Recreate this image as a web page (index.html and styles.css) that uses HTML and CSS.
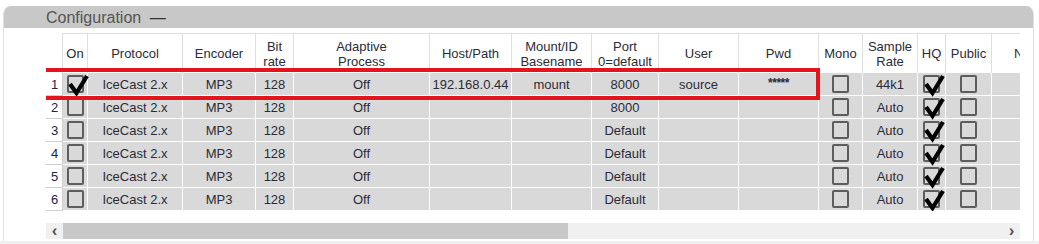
FILE: index.html
```html
<!DOCTYPE html>
<html lang="en">
<head>
  <meta charset="UTF-8">
  <title>Configuration</title>
  <link rel="stylesheet" href="styles.css">
</head>
<body>
  <div class="panel">
    <div class="panel-head">Configuration <span class="collapse">—</span></div>
    <div class="panel-body">
      <div class="grid-wrap">
        <table class="grid">
          <colgroup>
            <col style="width:17px"><col style="width:25px"><col style="width:95px"><col style="width:73px">
            <col style="width:38px"><col style="width:136px"><col style="width:82px"><col style="width:80px">
            <col style="width:67px"><col style="width:80px"><col style="width:80px"><col style="width:44px">
            <col style="width:55px"><col style="width:28px"><col style="width:46px"><col style="width:60px">
          </colgroup>
          <thead>
            <tr>
              <th class="num"></th>
              <th>On</th>
              <th>Protocol</th>
              <th>Encoder</th>
              <th>Bit<br>rate</th>
              <th>Adaptive<br>Process</th>
              <th>Host/Path</th>
              <th>Mount/ID<br>Basename</th>
              <th>Port<br>0=default</th>
              <th>User</th>
              <th>Pwd</th>
              <th>Mono</th>
              <th>Sample<br>Rate</th>
              <th>HQ</th>
              <th>Public</th>
              <th class="clip">N</th>
            </tr>
          </thead>
          <tbody id="rows"></tbody>
        </table>
        <div class="highlight"></div>
      </div>
      <div class="hscroll">
        <span class="arrow">&lsaquo;</span>
        <span class="thumb"></span>
        <span class="track"></span>
        <span class="arrow">&rsaquo;</span>
      </div>
    </div>
  </div>
  <div class="footer"></div>
<script>
  const rows = [
    { on: true, host: '192.168.0.44', mount: 'mount', port: '8000', user: 'source', pwd: '*****', rate: '44k1' },
    { on: false, host: '', mount: '', port: '8000', user: '', pwd: '', rate: 'Auto' },
    { on: false, host: '', mount: '', port: 'Default', user: '', pwd: '', rate: 'Auto' },
    { on: false, host: '', mount: '', port: 'Default', user: '', pwd: '', rate: 'Auto' },
    { on: false, host: '', mount: '', port: 'Default', user: '', pwd: '', rate: 'Auto' },
    { on: false, host: '', mount: '', port: 'Default', user: '', pwd: '', rate: 'Auto' }
  ];

  const tick = '<svg class="tick" viewBox="0 0 22 24" width="22" height="24"><path d="M2 11 L8.5 20 L19 3" fill="none" stroke="#000" stroke-width="4.2" stroke-linejoin="miter"/></svg>';
  const box = (checked) => `<span class="box">${checked ? tick : ''}</span>`;

  const body = document.getElementById('rows');
  rows.forEach((r, i) => {
    const tr = document.createElement('tr');
    tr.innerHTML = `
      <td class="num">${i + 1}</td>
      <td>${box(r.on)}</td>
      <td>IceCast 2.x</td>
      <td>MP3</td>
      <td>128</td>
      <td>Off</td>
      <td>${r.host}</td>
      <td>${r.mount}</td>
      <td>${r.port}</td>
      <td>${r.user}</td>
      <td class="pwd">${r.pwd}</td>
      <td>${box(false)}</td>
      <td>${r.rate}</td>
      <td>${box(true)}</td>
      <td>${box(false)}</td>
      <td></td>`;
    body.appendChild(tr);
  });
</script>
</body>
</html>
```

FILE: styles.css
```css
body {
  margin: 0;
  background: #ffffff;
  font-family: "Liberation Sans", Arial, sans-serif;
  color: #2b2b38;
}

.panel {
  margin: 6px 0 0 3px;
  width: 1029px;
  border-left: 1px solid #e2e2e2;
  border-right: 1px solid #e2e2e2;
  border-radius: 8px 8px 0 0;
}

.panel-head {
  height: 22px;
  line-height: 24px;
  background: #c8c8c8;
  border-radius: 7px 7px 0 0;
  padding-left: 42px;
  font-size: 16px;
  color: #555;
}

.panel-head .collapse {
  margin-left: 4px;
  color: #333;
}

.panel-body {
  padding: 5px 0 2px 42px;
}

.grid-wrap {
  position: relative;
  width: 974px;
  overflow: hidden;
}

.grid {
  table-layout: fixed;
  width: 1006px;
  border-collapse: separate;
  border-spacing: 0;
  font-size: 13px;
}

.grid th {
  height: 39px;
  padding: 0;
  font-weight: normal;
  line-height: 15px;
  text-align: center;
  background: #fff;
  border-top: 1px solid #dedede;
  border-right: 1px solid #dedede;
  white-space: nowrap;
  overflow: hidden;
}

.grid th.num {
  border-top: none;
  border-right: 1px solid #dedede;
}

.grid th.clip {
  text-align: left;
  padding-left: 22px;
}

.grid td {
  height: 22px;
  padding: 0;
  text-align: center;
  background: #d9d9d9;
  border-right: 1px solid #fff;
  border-bottom: 1px solid #fff;
  white-space: nowrap;
}

.grid td.num {
  background: #fff;
  text-align: left;
  padding-left: 5px;
  color: #22224a;
  border-right: 1px solid #cfcfcf;
  border-bottom: 1px solid #cfcfcf;
}

.grid td.pwd {
  font-size: 12px;
  font-weight: bold;
  line-height: 12px;
  vertical-align: top;
  padding-top: 4px;
  height: 18px;
  letter-spacing: -0.5px;
}

.box {
  position: relative;
  display: inline-block;
  width: 13px;
  height: 14px;
  border: 2px solid #5d5d5d;
  border-radius: 2px;
  vertical-align: middle;
}

.tick {
  position: absolute;
  left: -1px;
  top: -4px;
}

.highlight {
  position: absolute;
  left: -4px;
  top: 35px;
  width: 770px;
  height: 24px;
  border: 4px solid #e3141c;
}

.hscroll {
  display: flex;
  width: 974px;
  height: 16px;
  margin-top: 12px;
  background: #f0f0f0;
  align-items: center;
}

.hscroll .arrow {
  width: 17px;
  text-align: center;
  font-size: 17px;
  font-weight: bold;
  line-height: 16px;
  color: #555;
}

.hscroll .thumb {
  width: 505px;
  height: 16px;
  background: #c8c8c8;
}

.hscroll .track {
  flex: 1;
}

.footer {
  height: 6px;
  background: #f0f0f0;
}
```
